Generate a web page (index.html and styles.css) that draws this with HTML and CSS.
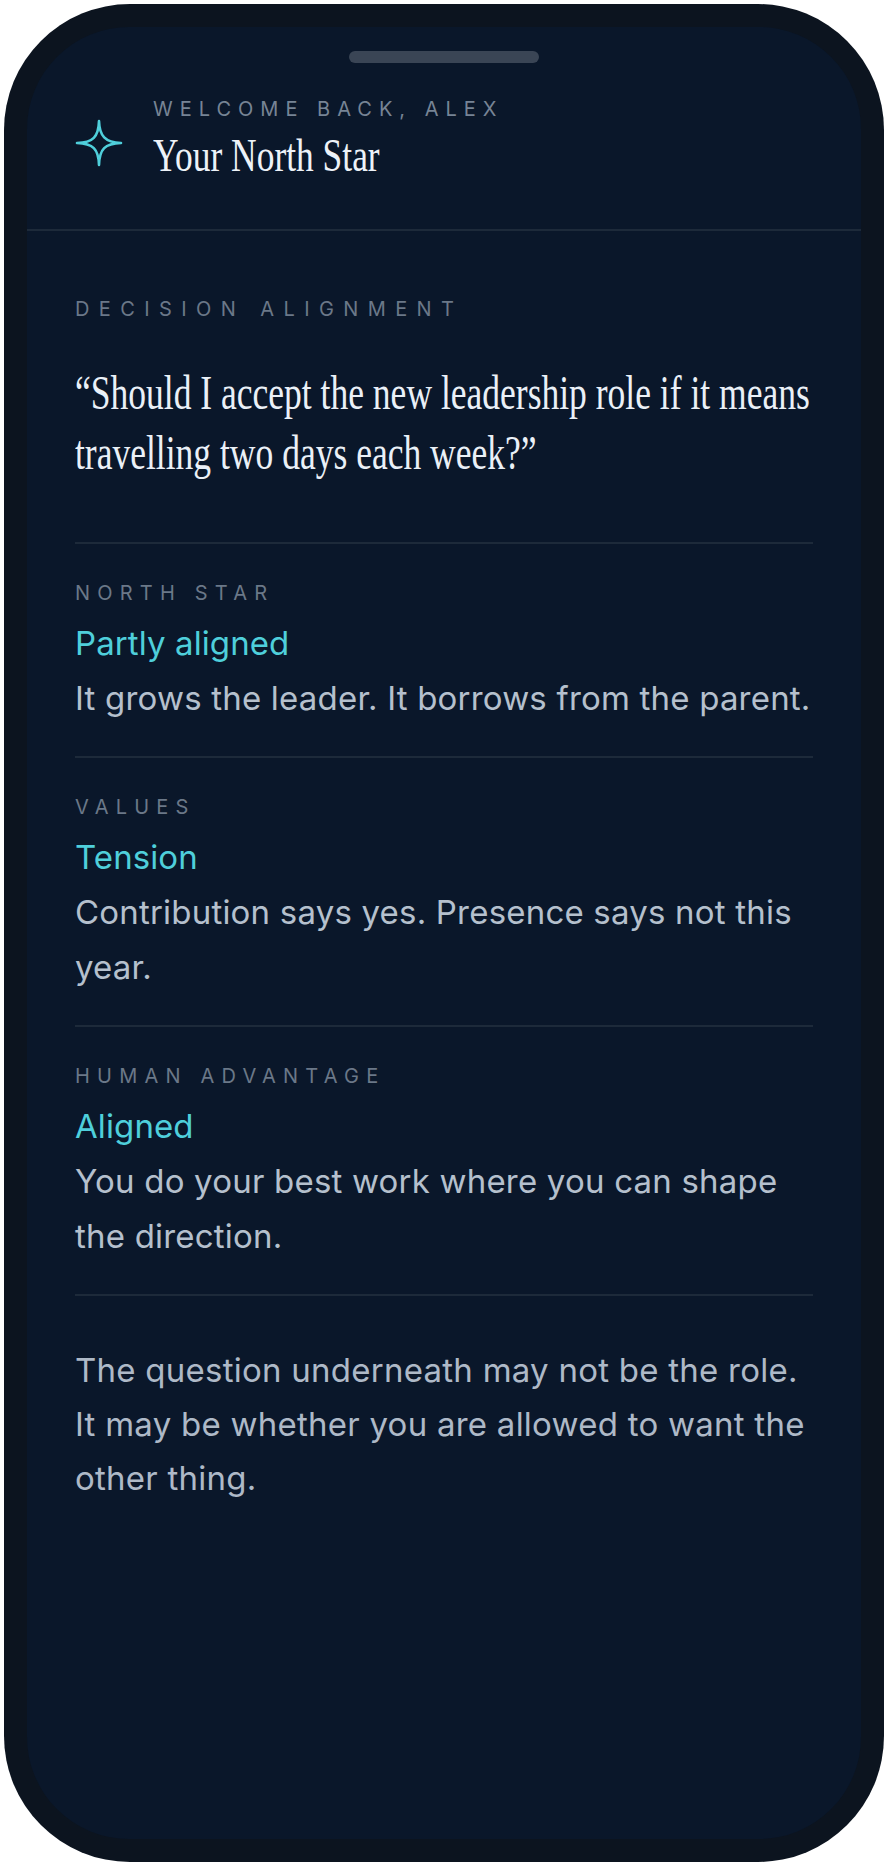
FILE: index.html
```html
<!DOCTYPE html>
<html lang="en">
<head>
<meta charset="utf-8">
<title>Your North Star</title>
<link rel="stylesheet" href="styles.css">
</head>
<body>
<div class="phone">
  <div class="screen">
    <div class="grabber"></div>
    <header class="header">
      <svg class="star" viewBox="0 0 48 48" aria-hidden="true">
        <path d="M24 2 C24.5 17 30 23.5 46 24 C30 24.5 24.5 30 24 46 C23.5 30 18 24.5 2 24 C18 23.5 23.5 18 24 2 Z" />
      </svg>
      <div class="hello">
        <div class="eyebrow">WELCOME BACK, ALEX</div>
        <h1 class="title"><span class="condensed">Your North Star</span></h1>
      </div>
    </header>
    <main class="content">
      <div class="kicker">DECISION ALIGNMENT</div>
      <div class="quote-wrap">
        <blockquote class="quote">“Should I accept the new leadership role if it means travelling two days each week?”</blockquote>
      </div>
      <section class="item">
        <div class="label">NORTH STAR</div>
        <div class="status">Partly aligned</div>
        <p class="body">It grows the leader. It borrows from the parent.</p>
      </section>
      <section class="item">
        <div class="label">VALUES</div>
        <div class="status">Tension</div>
        <p class="body">Contribution says yes. Presence says not this year.</p>
      </section>
      <section class="item">
        <div class="label">HUMAN ADVANTAGE</div>
        <div class="status">Aligned</div>
        <p class="body">You do your best work where you can shape the direction.</p>
      </section>
      <p class="closing">The question underneath may not be the role.<br>It may be whether you are allowed to want the other thing.</p>
    </main>
  </div>
</div>
</body>
</html>
```

FILE: styles.css
```css
html, body {
  margin: 0;
  padding: 0;
  background: #ffffff;
}

body {
  padding: 4px;
  font-family: "Inter", "Liberation Sans", sans-serif;
}

.phone {
  width: 880px;
  height: 1858px;
  box-sizing: border-box;
  padding: 23px;
  background: #0c141f;
  border-radius: 126px;
}

.screen {
  height: 100%;
  background: #0a172a;
  border-radius: 102px;
  overflow: hidden;
  display: flex;
  flex-direction: column;
}

.grabber {
  align-self: center;
  width: 190px;
  height: 12px;
  margin-top: 24px;
  border-radius: 6px;
  background: #3a4555;
}

.header {
  display: flex;
  align-items: center;
  gap: 30px;
  padding: 34px 48px 47px 48px;
  border-bottom: 2px solid #1d2a3a;
}

.star {
  width: 48px;
  height: 48px;
  flex: none;
  margin-top: 7px;
}

.star path {
  fill: none;
  stroke: #4fcfdb;
  stroke-width: 2.6;
  stroke-linejoin: round;
}

.hello {
  display: flex;
  flex-direction: column;
}

.eyebrow {
  font-size: 20px;
  line-height: 24px;
  letter-spacing: 0.35em;
  color: #778495;
}

.title {
  margin: 9px 0 0;
  font-weight: 400;
  font-size: 46px;
  line-height: 52px;
  color: #edf2f8;
  font-family: "Liberation Serif", "Times New Roman", serif;
  white-space: nowrap;
}

.condensed {
  display: inline-block;
  transform: scaleX(0.77);
  transform-origin: left center;
}

.content {
  padding: 63px 48px 0 48px;
}

.kicker {
  font-size: 20px;
  line-height: 30px;
  letter-spacing: 0.47em;
  color: #6b7888;
}

.quote-wrap {
  margin: 39px 0 59px;
}

.quote {
  margin: 0;
  width: calc(100% / 0.74);
  transform: scaleX(0.74);
  transform-origin: left top;
  font-family: "Liberation Serif", "Times New Roman", serif;
  font-size: 48px;
  line-height: 60px;
  color: #eaf0f7;
}

.item {
  border-top: 2px solid #1d2a3a;
  padding: 34px 0 30px;
}

.label {
  font-size: 20px;
  line-height: 30px;
  letter-spacing: 0.36em;
  color: #6b7888;
}

.status {
  margin-top: 7px;
  font-size: 33px;
  line-height: 56px;
  letter-spacing: 0.1px;
  color: #4fcfdb;
}

.body {
  margin: 0;
  font-size: 33px;
  line-height: 55px;
  letter-spacing: 0.2px;
  color: #b5c0cd;
}

.closing {
  margin: 0;
  border-top: 2px solid #1d2a3a;
  padding-top: 47px;
  font-size: 33px;
  line-height: 54px;
  letter-spacing: 0.25px;
  color: #aeb9c7;
}
```
